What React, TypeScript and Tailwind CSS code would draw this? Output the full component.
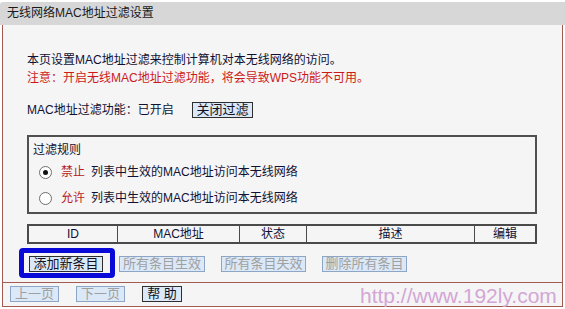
import React from "react";

type BtnProps = { label: string; w: string; disabled?: boolean };

const Btn = ({ label, w, disabled }: BtnProps) => (
  <button
    className={
      "h-[16px] border text-[13px] leading-[14px] text-center bg-[#dbe8f7] " +
      w +
      (disabled ? " border-[#8ea6c6] text-[#a0a0a0]" : " border-[#2e2e2e] text-[#111122]")
    }
  >
    {label}
  </button>
);

const Radio = ({ checked }: { checked?: boolean }) => (
  <span className="w-[13px] h-[13px] rounded-full border border-[#6f6f6f] bg-white flex items-center justify-center shrink-0">
    {checked && <span className="w-[5px] h-[5px] rounded-full bg-[#111]" />}
  </span>
);

export default function App() {
  return (
    <div className="relative w-[565px] h-[309px] bg-white text-[12px] text-[#111133] font-['Liberation_Sans','Noto_Sans_CJK_SC',sans-serif]">
      {/* title bar */}
      <div className="mt-[2px] h-[23px] bg-[#d7d7d7] pl-[7px] leading-[23px] text-[#1a1a1a] rounded-tl-[3px]">
        无线网络MAC地址过滤设置
      </div>

      <div className="mx-[2px] border-x border-b border-[#a35a50] bg-[#f5f5f5]">
        <div className="h-[257px] pl-[24px] pt-[26px]">
          <p className="leading-[18px]">本页设置MAC地址过滤来控制计算机对本无线网络的访问。</p>
          <p className="leading-[18px] text-[#cc1a1a]">注意：开启无线MAC地址过滤功能，将会导致WPS功能不可用。</p>

          <div className="mt-[14px] h-[18px] flex items-center">
            <span className="w-[165px]">MAC地址过滤功能：已开启</span>
            <Btn label="关闭过滤" w="w-[61px]" />
          </div>

          <div className="mt-[16px] w-[510px] h-[79px] border-2 border-[#505050] pl-[4px] pt-[4px]">
            <div className="leading-[18px]">过滤规则</div>
            <div className="mt-[4px] h-[18px] flex items-center pl-[6px]">
              <Radio checked />
              <span className="ml-[9px] text-[#b81c1c]">禁止</span>
              <span className="ml-[6px]">列表中生效的MAC地址访问本无线网络</span>
            </div>
            <div className="mt-[8px] h-[18px] flex items-center pl-[6px]">
              <Radio />
              <span className="ml-[9px] text-[#b81c1c]">允许</span>
              <span className="ml-[6px]">列表中生效的MAC地址访问本无线网络</span>
            </div>
          </div>

          <div className="mt-[10px] w-[510px] h-[20px] border-2 border-[#4a4a4a] flex leading-[16px] text-center">
            <div className="w-[88px]">ID</div>
            <div className="w-[122px] border-l border-[#4a4a4a]">MAC地址</div>
            <div className="w-[67px] border-l border-[#4a4a4a]">状态</div>
            <div className="w-[168px] border-l border-[#4a4a4a]">描述</div>
            <div className="w-[61px] border-l border-[#4a4a4a]">编辑</div>
          </div>

          <div className="mt-[12px] flex items-center gap-[16px] pl-[2px]">
            <div className="relative flex">
              <Btn label="添加新条目" w="w-[74px]" />
              <span className="absolute -left-[10px] -right-[12px] -top-[8px] -bottom-[6px] border-[5px] border-[#0a0ad8] rounded-[4px]" />
            </div>
            <Btn label="所有条目生效" w="w-[86px]" disabled />
            <Btn label="所有条目失效" w="w-[85px]" disabled />
            <Btn label="删除所有条目" w="w-[85px]" disabled />
          </div>
        </div>

        <div className="h-[24px] border-t border-[#a35a50] flex items-start gap-[17px] pl-[7px] pt-[3px]">
          <Btn label="上一页" w="w-[49px]" disabled />
          <Btn label="下一页" w="w-[49px]" disabled />
          <Btn label="帮 助" w="w-[40px]" />
        </div>
      </div>

      {/* watermark */}
      <span className="absolute left-[360px] top-[282px] text-[21px] leading-[24px] text-[#d3a6d6] font-['Liberation_Sans',sans-serif]">
        http://www.192ly.com
      </span>
    </div>
  );
}
